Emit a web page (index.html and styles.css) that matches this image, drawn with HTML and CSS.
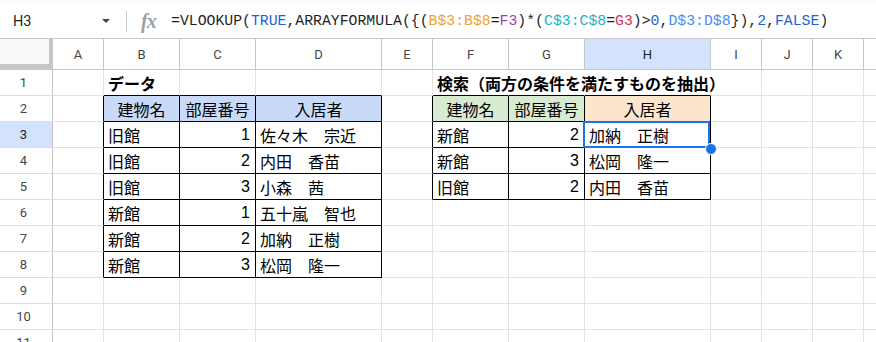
FILE: index.html
```html
<!DOCTYPE html>
<html lang="ja">
<head>
<meta charset="utf-8">
<link rel="stylesheet" href="styles.css">
</head>
<body>
<div class="top"></div>
<div class="fbar">
  <div class="namebox">H3</div>
  <div class="caret"></div>
  <div class="sep"></div>
  <div class="fx">fx</div>
  <div class="formula">=VLOOKUP(<span class="bl">TRUE</span>,ARRAYFORMULA({(<span class="or">B$3:B$8</span>=<span class="pu">F3</span>)*(<span class="cy">C$3:C$8</span>=<span class="rd">G3</span>)&gt;<span class="bl">0</span>,<span class="lb">D$3:D$8</span>}),<span class="bl">2</span>,<span class="bl">FALSE</span>)</div>
</div>
<div class="sheet">
  <!-- header -->
  <div class="c corner"></div>
  <div class="c ch">A</div><div class="c ch">B</div><div class="c ch">C</div><div class="c ch">D</div><div class="c ch">E</div><div class="c ch">F</div><div class="c ch">G</div><div class="c ch hl">H</div><div class="c ch">I</div><div class="c ch">J</div><div class="c ch">K</div><div class="c ch last"></div>
  <!-- row 1 -->
  <div class="c rh">1</div>
  <div class="c"></div><div class="c bb title">データ</div><div class="c bb"></div><div class="c bb"></div><div class="c"></div>
  <div class="c bb nr title">検索（両方の条件を満たすものを抽出）</div><div class="c bb nr"></div><div class="c bb nr"></div>
  <div class="c"></div><div class="c"></div><div class="c"></div><div class="c last"></div>
  <!-- row 2 -->
  <div class="c rh">2</div>
  <div class="c br"></div><div class="c br bb ctr hb">建物名</div><div class="c br bb ctr hb">部屋番号</div><div class="c br bb ctr hb">入居者</div><div class="c br"></div>
  <div class="c br bb ctr hg">建物名</div><div class="c br bb ctr hg">部屋番号</div><div class="c br bb ctr ho">入居者</div>
  <div class="c"></div><div class="c"></div><div class="c"></div><div class="c last"></div>
  <!-- row 3 -->
  <div class="c rh hl">3</div>
  <div class="c br"></div><div class="c br bb">旧館</div><div class="c br bb num">1</div><div class="c br bb">佐々木　宗近</div><div class="c br"></div>
  <div class="c br bb">新館</div><div class="c br bb num">2</div><div class="c br bb selcell">加納　正樹<div class="selbox"></div><div class="handle"></div></div>
  <div class="c"></div><div class="c"></div><div class="c"></div><div class="c last"></div>
  <!-- row 4 -->
  <div class="c rh">4</div>
  <div class="c br"></div><div class="c br bb">旧館</div><div class="c br bb num">2</div><div class="c br bb">内田　香苗</div><div class="c br"></div>
  <div class="c br bb">新館</div><div class="c br bb num">3</div><div class="c br bb">松岡　隆一</div>
  <div class="c"></div><div class="c"></div><div class="c"></div><div class="c last"></div>
  <!-- row 5 -->
  <div class="c rh">5</div>
  <div class="c br"></div><div class="c br bb">旧館</div><div class="c br bb num">3</div><div class="c br bb">小森　茜</div><div class="c br"></div>
  <div class="c br bb">旧館</div><div class="c br bb num">2</div><div class="c br bb">内田　香苗</div>
  <div class="c"></div><div class="c"></div><div class="c"></div><div class="c last"></div>
  <!-- row 6 -->
  <div class="c rh">6</div>
  <div class="c br"></div><div class="c br bb">新館</div><div class="c br bb num">1</div><div class="c br bb">五十嵐　智也</div><div class="c"></div>
  <div class="c"></div><div class="c"></div><div class="c"></div>
  <div class="c"></div><div class="c"></div><div class="c"></div><div class="c last"></div>
  <!-- row 7 -->
  <div class="c rh">7</div>
  <div class="c br"></div><div class="c br bb">新館</div><div class="c br bb num">2</div><div class="c br bb">加納　正樹</div><div class="c"></div>
  <div class="c"></div><div class="c"></div><div class="c"></div>
  <div class="c"></div><div class="c"></div><div class="c"></div><div class="c last"></div>
  <!-- row 8 -->
  <div class="c rh">8</div>
  <div class="c br"></div><div class="c br bb">新館</div><div class="c br bb num">3</div><div class="c br bb">松岡　隆一</div><div class="c"></div>
  <div class="c"></div><div class="c"></div><div class="c"></div>
  <div class="c"></div><div class="c"></div><div class="c"></div><div class="c last"></div>
  <!-- row 9 -->
  <div class="c rh">9</div>
  <div class="c"></div><div class="c"></div><div class="c"></div><div class="c"></div><div class="c"></div>
  <div class="c"></div><div class="c"></div><div class="c"></div>
  <div class="c"></div><div class="c"></div><div class="c"></div><div class="c last"></div>
  <!-- row 10 -->
  <div class="c rh">10</div>
  <div class="c"></div><div class="c"></div><div class="c"></div><div class="c"></div><div class="c"></div>
  <div class="c"></div><div class="c"></div><div class="c"></div>
  <div class="c"></div><div class="c"></div><div class="c"></div><div class="c last"></div>
  <!-- row 11 -->
  <div class="c rh">11</div>
  <div class="c"></div><div class="c"></div><div class="c"></div><div class="c"></div><div class="c"></div>
  <div class="c"></div><div class="c"></div><div class="c"></div>
  <div class="c"></div><div class="c"></div><div class="c"></div><div class="c last"></div>
</div>
</body>
</html>
```
FILE: styles.css
```css
html, body {
  margin: 0;
  padding: 0;
}
body {
  width: 876px;
  height: 342px;
  overflow: hidden;
  background: #ffffff;
  font-family: "Liberation Sans", "Noto Sans CJK JP", sans-serif;
}
.top {
  height: 4px;
  background: #f9fbfd;
}
.fbar {
  box-sizing: border-box;
  height: 35px;
  border-bottom: 1px solid #c7c7c7;
  display: flex;
  align-items: center;
}
.namebox {
  box-sizing: border-box;
  width: 102px;
  padding-left: 13px;
  font-family: Roboto, "Liberation Sans", sans-serif;
  font-size: 14.5px;
  color: #1f1f1f;
}
.caret {
  width: 0;
  height: 0;
  border-left: 4.5px solid transparent;
  border-right: 4.5px solid transparent;
  border-top: 4.5px solid #444746;
}
.sep {
  width: 1px;
  height: 21px;
  margin-left: 16px;
  background: #c7c7c7;
}
.fx {
  width: 17px;
  margin-left: 14px;
  font-family: "Liberation Serif", serif;
  font-style: italic;
  font-weight: bold;
  font-size: 20px;
  letter-spacing: -1px;
  color: #a0a0a0;
  line-height: 1;
}
.formula {
  margin-left: 13px;
  font-family: "Liberation Mono", monospace;
  font-size: 14.8px;
  color: #1f1f1f;
  white-space: nowrap;
}
.bl { color: #1a62d6; }
.or { color: #f3a033; }
.pu { color: #9c45a8; }
.cy { color: #1bb3c9; }
.rd { color: #d5315a; }
.lb { color: #4a8af4; }

.sheet {
  display: grid;
  grid-template-columns: 53px 51px 76px 76px 126px 51px 76px 76px 126px 51px 51px 51px 12px;
  grid-template-rows: 31px repeat(11, 26px);
}
.c {
  box-sizing: border-box;
  min-width: 0;
  border-right: 1px solid #e2e2e2;
  border-bottom: 1px solid #e2e2e2;
  display: flex;
  align-items: center;
  padding: 0 4px;
  font-size: 16px;
  color: #000;
  white-space: nowrap;
}
.c.last {
  border-right: none;
}
.ch {
  justify-content: center;
  padding: 0;
  border-right-color: #c4c7c5;
  border-bottom-color: #c4c7c5;
  font-family: Roboto, "Liberation Sans", sans-serif;
  font-size: 13px;
  color: #444746;
}
.corner {
  background: #f8f9fa;
  border-right: 4px solid #c4c7c5;
  border-bottom: 6px solid #c4c7c5;
}
.rh {
  justify-content: center;
  padding: 0 5px 0 0;
  border-right-color: #c4c7c5;
  border-bottom-color: #dcdcdc;
  font-family: Roboto, "Liberation Sans", sans-serif;
  font-size: 13px;
  color: #444746;
}
.hl {
  background: #d3e3fd;
  color: #1f1f1f;
}
.title {
  font-weight: bold;
  overflow: visible;
}
.nr { border-right-color: transparent; }
.br { border-right-color: #000000; }
.bb { border-bottom-color: #000000; }
.ctr { justify-content: center; }
.num {
  justify-content: flex-end;
  padding-right: 5px;
}
.hb { background: #c9daf8; }
.hg { background: #d9ead3; }
.ho { background: #fce5cd; }
.selcell {
  position: relative;
}
.selbox {
  position: absolute;
  left: -2px;
  top: -1px;
  width: 127px;
  height: 27px;
  box-sizing: border-box;
  border: 2px solid #1a73e8;
}
.handle {
  position: absolute;
  left: 120px;
  top: 21px;
  width: 12px;
  height: 12px;
  box-sizing: border-box;
  border-radius: 50%;
  background: #1a73e8;
  border: 1px solid #ffffff;
}
```
